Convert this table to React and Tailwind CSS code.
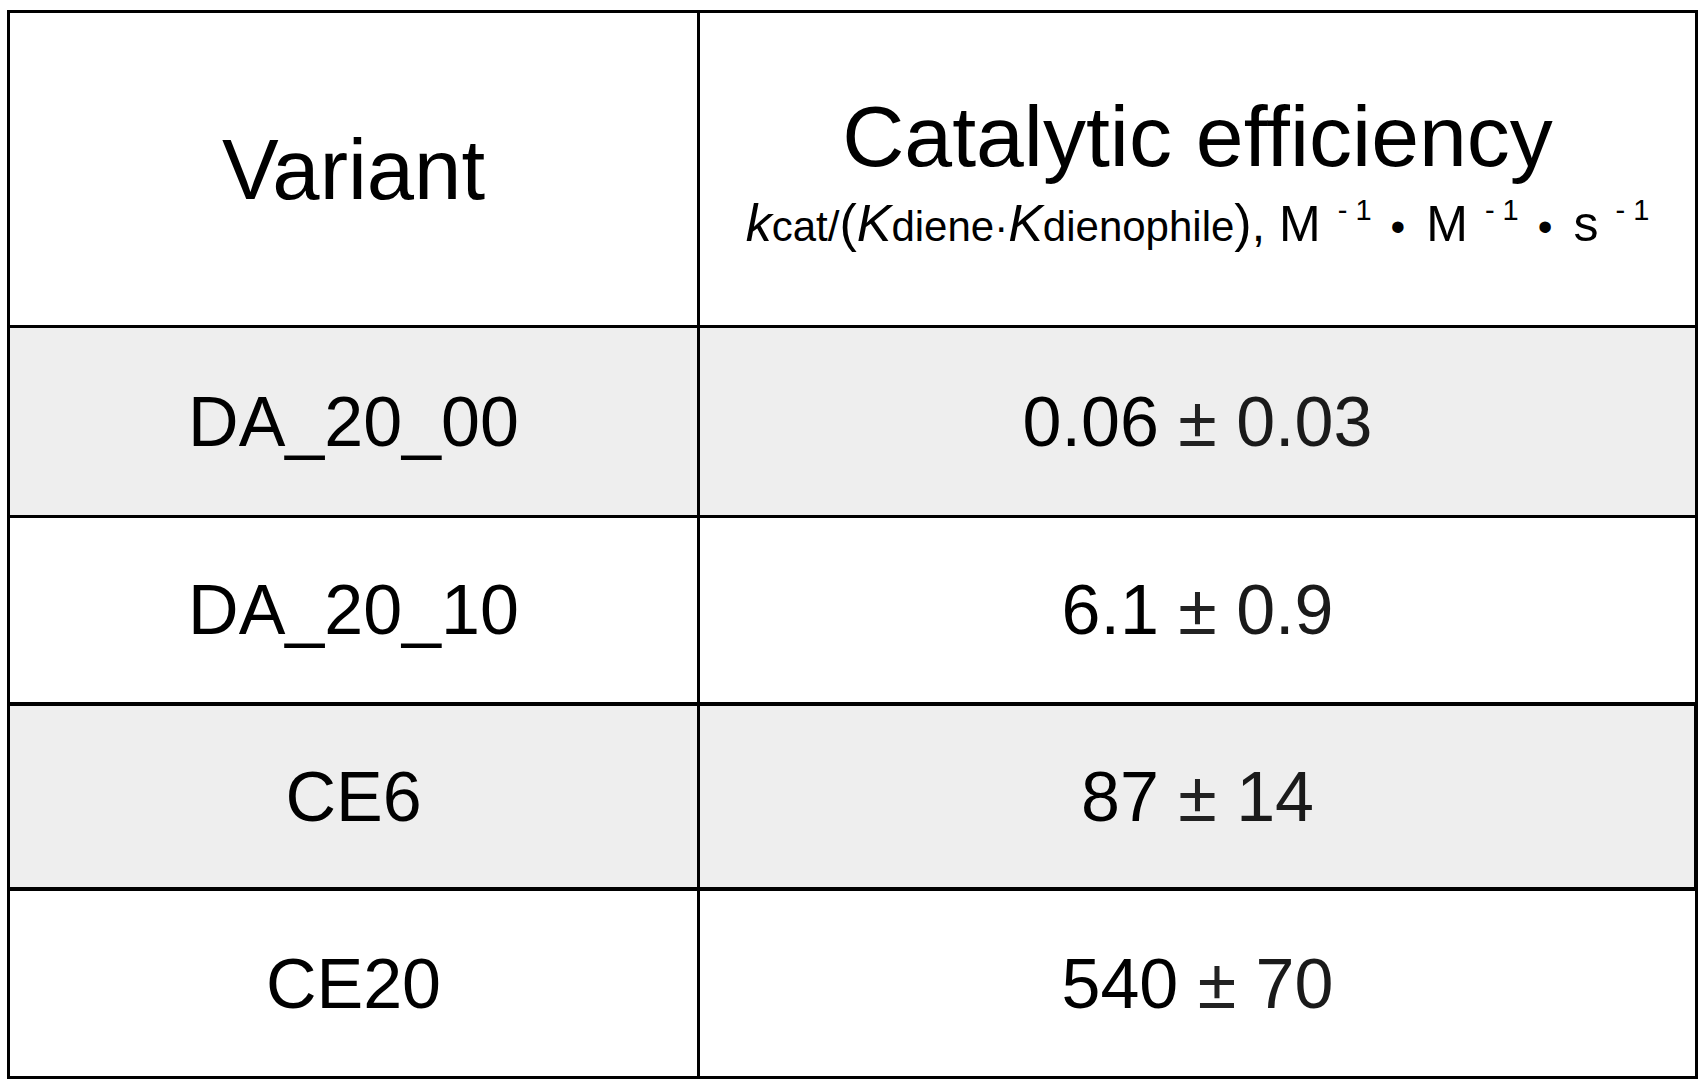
const rows = [
  { name: "DA_20_00", value: "0.06", err: "0.03", row: "h-[190px] bg-[#eeeeee] border-t-[3px]" },
  { name: "DA_20_10", value: "6.1", err: "0.9", row: "h-[187px] bg-white border-t-[3px]" },
  { name: "CE6", value: "87", err: "14", row: "h-[185px] bg-[#eeeeee] border-t-[4px] shadow-[-3px_0_0_#000,inset_-1px_0_0_#000]" },
  { name: "CE20", value: "540", err: "70", row: "h-[189px] bg-white border-t-[4px]" },
];

function Sup({ children, className = "" }) {
  return (
    <span className={`inline-block text-[29px] align-[21px] ${className}`}>{children}</span>
  );
}

export default function App() {
  return (
    <div className="min-h-screen bg-white text-black font-['Liberation_Sans',Arial,sans-serif] pt-[10px] pl-[7px]">
      <div className="w-[1691px] border-[3px] border-black">
        {/* header */}
        <div className="grid grid-cols-[690px_1fr] h-[312px]">
          <div className="border-r-[3px] border-black flex items-center justify-center text-[85px] leading-none">
            Variant
          </div>
          <div className="flex flex-col items-center justify-center pt-[4px]">
            <div className="text-[86px] leading-none">Catalytic efficiency</div>
            <div className="mt-[17px] whitespace-nowrap leading-none text-[42px]">
              <i className="text-[52px]">k</i>
              <span>cat/</span>
              <span className="text-[52px]">(</span>
              <i className="text-[52px]">K</i>
              <span>diene</span>
              <span>·</span>
              <i className="text-[52px]">K</i>
              <span>dienophile</span>
              <span className="text-[52px]">)</span>
              <span className="text-[48px]">,</span>
              <span className="text-[50px] ml-[14px]">M</span>
              <Sup className="ml-[17px]">-&nbsp;1</Sup>
              <span className="text-[42px] ml-[19px]">•</span>
              <span className="text-[50px] ml-[21px]">M</span>
              <Sup className="ml-[17px]">-&nbsp;1</Sup>
              <span className="text-[42px] ml-[19px]">•</span>
              <span className="text-[50px] ml-[21px]">s</span>
              <Sup className="ml-[17px]">-&nbsp;1</Sup>
            </div>
          </div>
        </div>

        {rows.map((r) => (
          <div key={r.name} className={`grid grid-cols-[690px_1fr] border-black ${r.row}`}>
            <div className="border-r-[3px] border-black flex items-center justify-center text-[70px] leading-none">
              {r.name}
            </div>
            <div className="flex items-center justify-center text-[70px] leading-none">
              <span className="whitespace-pre">
                {r.value + " "}
                <span className="text-[#222]">±</span>
                <span className="text-[#1a1a1a]">{" " + r.err}</span>
              </span>
            </div>
          </div>
        ))}
      </div>
    </div>
  );
}
